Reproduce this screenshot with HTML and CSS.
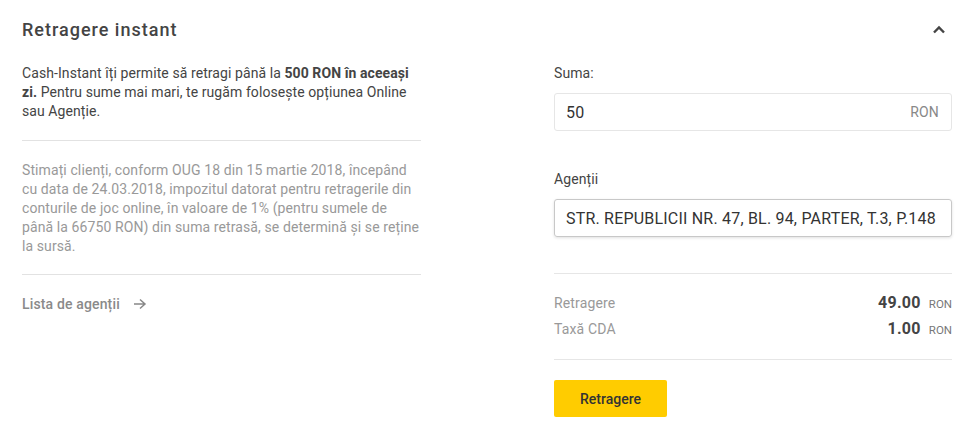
FILE: index.html
```html
<!DOCTYPE html>
<html lang="ro">
<head>
<meta charset="utf-8">
<link rel="stylesheet" href="styles.css">
</head>
<body>
<div class="panel">
  <div class="header">
    <h2 class="title">Retragere instant</h2>
    <svg class="chevron" width="14" height="10" viewBox="0 0 14 10"><path d="M2 7.5 L7 2.5 L12 7.5" fill="none" stroke="#444" stroke-width="2.4"/></svg>
  </div>
  <div class="cols">
    <div class="left">
      <p class="intro">Cash-Instant îți permite să retragi până la <b>500 RON în aceeași</b> <b>zi.</b> Pentru sume mai mari, te rugăm folosește opțiunea Online sau Agenție.</p>
      <p class="note">Stimați clienți, conform OUG 18 din 15 martie 2018, începând cu data de 24.03.2018, impozitul datorat pentru retragerile din conturile de joc online, în valoare de 1% (pentru sumele de până la 66750 RON) din suma retrasă, se determină și se reține la sursă.</p>
      <a class="link">Lista de agenții <svg width="14" height="12" viewBox="0 0 14 12"><path d="M1 6 H12 M7 1.5 L12 6 L7 10.5" fill="none" stroke="#888" stroke-width="1.5"/></svg></a>
    </div>
    <div class="right">
      <label class="lbl">Suma:</label>
      <div class="field"><span class="val">50</span><span class="unit">RON</span></div>
      <label class="lbl lbl2">Agenții</label>
      <div class="field field-active"><span class="val">STR. REPUBLICII NR. 47, BL. 94, PARTER, T.3, P.148</span></div>
      <div class="summary">
        <div class="row"><span class="k">Retragere</span><span class="v"><b>49.00</b><small>RON</small></span></div>
        <div class="row"><span class="k">Taxă CDA</span><span class="v"><b>1.00</b><small>RON</small></span></div>
      </div>
      <button class="btn">Retragere</button>
    </div>
  </div>
</div>
</body>
</html>
```
FILE: styles.css
```css
* { box-sizing: border-box; }
html, body { margin: 0; background: #fff; }
body { font-family: Roboto, "Noto Sans", sans-serif; color: #444; }
.panel { padding: 18px 27px 0 22px; }
.header { display: flex; justify-content: space-between; align-items: center; height: 24px; }
.title { margin: 0; font-size: 18px; font-weight: 500; color: #444; letter-spacing: 1px; line-height: 24px; }
.chevron { margin-right: 6px; }
.cols { display: grid; grid-template-columns: 399px 1fr; column-gap: 133px; margin-top: 22px; }
.left { font-size: 14px; line-height: 18.8px; }
.intro { margin: 0; padding: 0 0 20px; color: #444; border-bottom: 1px solid #e2e2e2; letter-spacing: 0.08px; }
.intro b { font-weight: 700; color: #444; }
.note { margin: 0; padding: 20px 0 19px; color: #999; border-bottom: 1px solid #e2e2e2; letter-spacing: 0.1px; }
.link { display: flex; align-items: center; gap: 13px; margin-top: 20px; color: #8a8a8a; font-weight: 500; font-size: 14px; line-height: 18px; letter-spacing: 0.15px; }
.right { display: flex; flex-direction: column; }
.lbl { font-size: 14px; line-height: 18px; color: #444; margin-top: 0; letter-spacing: 0.1px; }
.lbl2 { margin-top: 39px; }
.field { margin-top: 11px; height: 38px; border: 1px solid #e6e6e6; border-radius: 3px; display: flex; align-items: center; justify-content: space-between; padding: 0 12px 0 11px; }
.field-active { border-color: #c8c8c8; box-shadow: 0 1px 3px rgba(0,0,0,0.12); }
.val { font-size: 16px; color: #333; letter-spacing: 0.2px; white-space: nowrap; }
.unit { font-size: 14px; color: #888; letter-spacing: 0.2px; }
.summary { margin-top: 36px; border-top: 1px solid #e6e6e6; border-bottom: 1px solid #e6e6e6; padding: 19px 0 14px; }
.row { display: flex; justify-content: space-between; align-items: baseline; height: 26px; }
.k { font-size: 14px; color: #999; letter-spacing: 0.15px; }
.v b { font-size: 16px; font-weight: 700; color: #444; letter-spacing: 0.3px; }
.v small { font-size: 11.5px; color: #777; margin-left: 8px; }
.btn { align-self: flex-start; margin-top: 20px; width: 113px; height: 37px; border: 0; border-radius: 2px; background: #ffcc00; font-family: Roboto, sans-serif; font-size: 14px; font-weight: 500; color: #333; }
```
